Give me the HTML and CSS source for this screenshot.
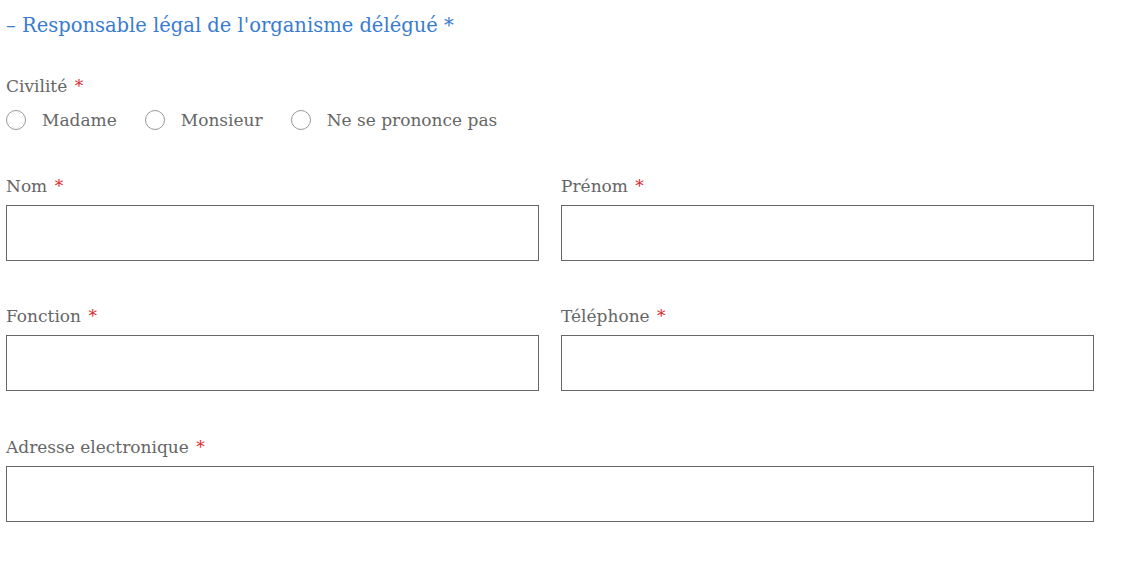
FILE: index.html
```html
<!DOCTYPE html>
<html lang="fr">
<head>
<meta charset="utf-8">
<link rel="stylesheet" href="styles.css">
</head>
<body>
<form class="form">
  <h2 class="section-title">– Responsable légal de l'organisme délégué *</h2>
  <div class="field civ">
    <div class="label">Civilité <span class="req">*</span></div>
    <div class="radios">
      <label class="radio"><span class="dot"></span>Madame</label>
      <label class="radio"><span class="dot"></span>Monsieur</label>
      <label class="radio"><span class="dot"></span>Ne se prononce pas</label>
    </div>
  </div>
  <div class="row">
    <div class="field">
      <div class="label">Nom <span class="req">*</span></div>
      <div class="input"></div>
    </div>
    <div class="field">
      <div class="label">Prénom <span class="req">*</span></div>
      <div class="input"></div>
    </div>
  </div>
  <div class="row">
    <div class="field">
      <div class="label">Fonction <span class="req">*</span></div>
      <div class="input"></div>
    </div>
    <div class="field">
      <div class="label">Téléphone <span class="req">*</span></div>
      <div class="input"></div>
    </div>
  </div>
  <div class="row single">
    <div class="field">
      <div class="label">Adresse electronique <span class="req">*</span></div>
      <div class="input"></div>
    </div>
  </div>
</form>
</body>
</html>
```
FILE: styles.css
```css
html, body {
  margin: 0;
  padding: 0;
  background: #fff;
}
body {
  font-family: "DejaVu Serif", Georgia, serif;
  color: #666;
}
.form {
  width: 1088px;
  padding: 11px 0 0 6px;
  display: flex;
  flex-direction: column;
}
.section-title {
  margin: 0;
  font-weight: normal;
  font-size: 19.5px;
  line-height: 30px;
  color: #3a7cd0;
}
.civ {
  margin-top: 33px;
}
.label {
  font-size: 17px;
  line-height: 24px;
}
.req {
  color: #e0282e;
  margin-left: 2px;
}
.radios {
  display: flex;
  gap: 28px;
  margin-top: 11px;
}
.radio {
  display: flex;
  align-items: center;
  gap: 16px;
  font-size: 17px;
  line-height: 22px;
}
.dot {
  width: 18px;
  height: 18px;
  border: 1px solid #999;
  border-radius: 50%;
  background: #fff;
}
.row {
  display: grid;
  grid-template-columns: 1fr 1fr;
  gap: 22px;
  margin-top: 43px;
}
.row.single {
  grid-template-columns: 1fr;
  margin-top: 44px;
}
.field .input {
  margin-top: 7px;
  height: 54px;
  border: 1px solid #666;
}
```
